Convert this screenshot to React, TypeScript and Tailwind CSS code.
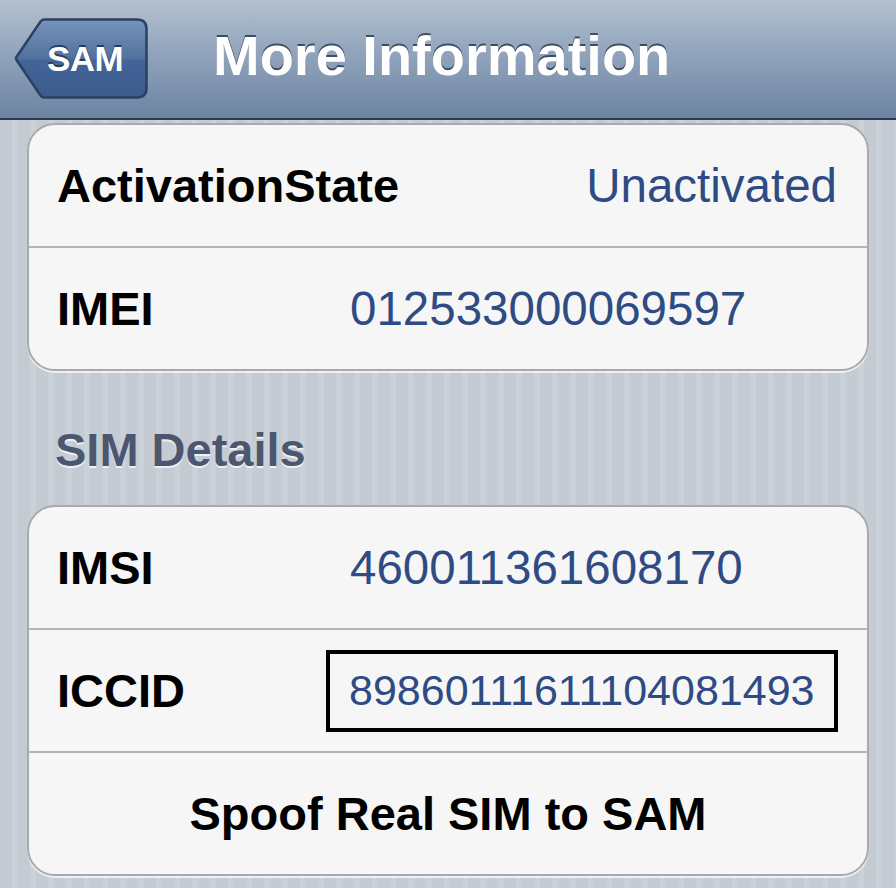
import React from 'react';

const font = { fontFamily: '"Liberation Sans", Arial, Helvetica, sans-serif' };

function BackButton() {
  return (
    <div className="relative flex h-[81px] w-[134px] items-center pl-[33px]">
      {/* button shape */}
      <svg className="absolute inset-0" width="134" height="81" viewBox="0 0 134 81">
        <defs>
          <linearGradient id="bb" x1="0" y1="0" x2="0" y2="1">
            <stop offset="0" stopColor="#7694bd" />
            <stop offset="0.5" stopColor="#52729d" />
            <stop offset="0.52" stopColor="#446598" />
            <stop offset="1" stopColor="#3c5c8e" />
          </linearGradient>
        </defs>
        <path
          d="M30 1.5 H123 Q132.5 1.5 132.5 11 V70 Q132.5 79.5 123 79.5 H30 Q28 79.5 26.5 77.5 L2.5 42 Q1.5 40.5 2.5 39 L26.5 3.5 Q28 1.5 30 1.5 Z"
          fill="url(#bb)"
          stroke="#2c4061"
          strokeWidth="2.5"
        />
      </svg>
      <span className="relative text-[35px] font-bold leading-none tracking-[-0.5px] text-white [text-shadow:0_-2px_0_#2a3d5c]">
        SAM
      </span>
    </div>
  );
}

function Row({ label, value, boxed, justify }: { label: string; value?: string; boxed?: boolean; justify?: boolean }) {
  return (
    <div className={`flex h-[121px] items-center pl-[28px] pr-[30px] ${justify ? 'justify-between' : ''}`}>
      <span className={`text-[47px] font-bold leading-none text-black ${justify ? '' : 'w-[293px] shrink-0'}`}>
        {label}
      </span>
      {value && !boxed && (
        <span className="text-[47.5px] leading-none text-[#2f4b84]">{value}</span>
      )}
      {value && boxed && (
        <span className="-ml-[24px] flex h-[82px] items-center border-4 border-black px-[19px] text-[43px] leading-none text-[#2f4b84]">
          {value}
        </span>
      )}
    </div>
  );
}

function Divider() {
  return <div className="h-[2px] bg-[#b3b5b8]" />;
}

export default function App() {
  return (
    <div
      className="h-[888px] w-[896px] overflow-hidden bg-[repeating-linear-gradient(90deg,#c4cbd3_0px,#c4cbd3_12px,#cad1d8_12px,#cad1d8_18px)]"
      style={font}
    >
      {/* Navigation bar */}
      <div className="flex h-[120px] items-center border-b-2 border-[#2e3b4f] bg-linear-to-b from-[#b4c0cf] via-[#8ea1ba] to-[#6c83a2] pl-[14px]">
        <div className="-mt-[2px]">
          <BackButton />
        </div>
        <h1 className="-mt-[6px] ml-[65px] text-[56px] font-bold leading-none text-white [text-shadow:0_-2px_0_#3d4d66]">
          More Information
        </h1>
      </div>

      <div className="px-[27px] pt-[3px]">
        <div className="overflow-hidden rounded-[28px] border-2 border-[#a7aaae] bg-[#f6f6f6] shadow-[0_2px_0_rgba(255,255,255,0.7)]">
          <Row label="ActivationState" value="Unactivated" justify />
          <Divider />
          <Row label="IMEI" value="012533000069597" />
        </div>

        <div className="pb-[27px] pl-[28px] pt-[51px] text-[47px] font-bold leading-[56px] text-[#4c576f] [text-shadow:0_2px_0_#eef1f4]">
          SIM Details
        </div>

        <div className="overflow-hidden rounded-[28px] border-2 border-[#a7aaae] bg-[#f6f6f6] shadow-[0_2px_0_rgba(255,255,255,0.7)]">
          <Row label="IMSI" value="460011361608170" />
          <Divider />
          <Row label="ICCID" value="89860111611104081493" boxed />
          <Divider />
          <div className="flex h-[121px] items-center justify-center">
            <span className="text-[47px] font-bold leading-none text-black">
              Spoof Real SIM to SAM
            </span>
          </div>
        </div>
      </div>
    </div>
  );
}
